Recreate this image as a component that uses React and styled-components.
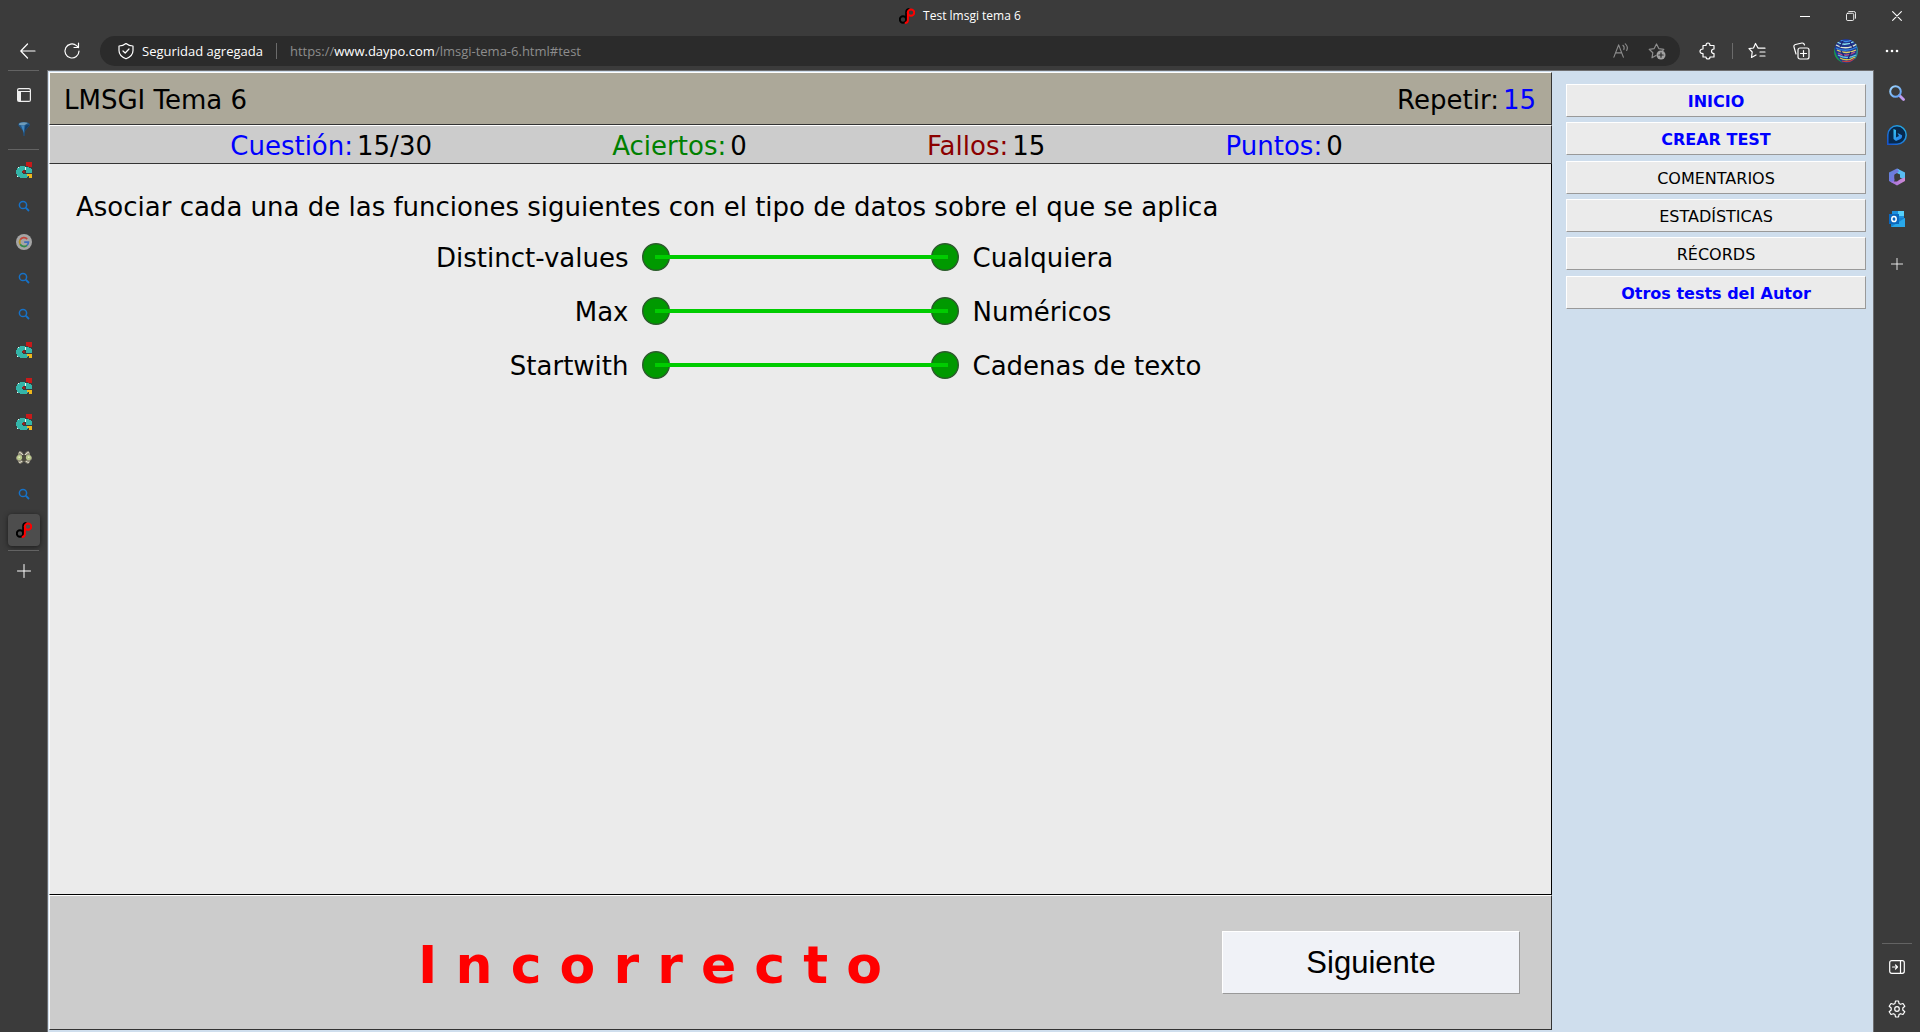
import React from "react";
import styled, { createGlobalStyle } from "styled-components";

const ui = '"Open Sans", "Noto Sans", sans-serif';
const web = '"DejaVu Sans", Verdana, sans-serif';

const GlobalStyle = createGlobalStyle`
  * { box-sizing: border-box; }
  body { margin: 0; background: #3b3b3b; }
  button { font: inherit; color: inherit; border: 0; padding: 0; background: none; cursor: pointer; }
  a { text-decoration: none; color: inherit; }
  h1, p, ul { margin: 0; padding: 0; list-style: none; font-weight: 400; }
  svg { display: block; }
`;

const Window = styled.div`
  min-height: 100vh;
  display: flex;
  flex-direction: column;
  background: #3b3b3b;
  color: #fff;
  font: 12px/16px ${ui};
`;

const TitleBar = styled.header`
  height: 32px;
  display: grid;
  grid-template-columns: 1fr auto 1fr;
  align-items: center;
`;
const WindowTitle = styled.div`
  grid-column: 2;
  display: flex;
  align-items: center;
  gap: 8px;
`;
const WindowControls = styled.div`
  display: flex;
  justify-content: flex-end;
`;
const ControlButton = styled.button`
  width: 46px;
  height: 32px;
  display: grid;
  place-items: center;
`;

const Toolbar = styled.nav`
  height: 38px;
  display: flex;
  align-items: center;
  padding: 0 6px;
`;
const ToolButton = styled.button`
  width: ${(p) => p.$w || 44}px;
  height: 30px;
  display: grid;
  place-items: center;
  flex: none;
`;
const AddressBar = styled.div`
  flex: 1;
  height: 30px;
  margin: 0 6px;
  padding: 0 5px 0 17px;
  border-radius: 15px;
  background: #2b2b2b;
  display: flex;
  align-items: center;
  font-size: 13px;
`;
const Security = styled.button`
  display: flex;
  align-items: center;
  gap: 7px;
`;
const BarDivider = styled.span`
  width: 1px;
  height: 16px;
  margin: 0 ${(p) => p.$gap}px;
  background: #6b6b6b;
  flex: none;
`;
const Url = styled.span`
  flex: 1;
  color: #8d8d8d;
`;
const Host = styled.span`
  color: #fff;
`;

const Body = styled.div`
  flex: 1;
  display: flex;
`;
const Rail = styled.aside`
  width: ${(p) => p.$w}px;
  display: flex;
  flex-direction: column;
  flex: none;
`;
const RailLine = styled.span`
  height: 1px;
  margin: 0 8px;
  background: #636363;
  flex: none;
`;
const RailGroup = styled.div`
  display: flex;
  flex-direction: column;
  align-items: center;
  gap: ${(p) => p.$gap || 0}px;
  padding: ${(p) => p.$pad || 0};
`;
const RailButton = styled.button`
  width: 32px;
  height: 32px;
  border-radius: 4px;
  display: grid;
  place-items: center;
  background: ${(p) => (p.$active ? "#4d4d4d" : "none")};
  box-shadow: ${(p) => (p.$active ? "0 1px 5px #1c1c1c" : "none")};
`;
const Spacer = styled.div`
  flex: 1;
`;

const Page = styled.div`
  flex: 1;
  display: flex;
  border: 1px solid #6e6e70;
  border-bottom: 0;
  background: #cfdeed;
  color: #000;
  font: 26px/32px ${web};
`;
const Quiz = styled.main`
  flex: 1;
  display: flex;
  flex-direction: column;
  margin: 1px 0 2px 1px;
`;
const Band = styled.section`
  border: 1px solid #333;
  border-top-color: #fff;
  border-left-color: #fff;
  display: flex;
  align-items: center;
`;
const TitleBand = styled(Band)`
  height: 53px;
  padding: 2px 15px 0 14px;
  justify-content: space-between;
  background: #aca899;
`;
const StatsBand = styled(Band)`
  height: 39px;
  padding: 2px 28px 0 0;
  justify-content: space-evenly;
  background: #ccc;
`;
const QuestionBand = styled(Band)`
  flex: 1;
  display: block;
  padding: 27px 26px 0;
  background: #ebebeb;
  border-top: 0;
  border-right-color: #000;
  border-bottom-color: #000;
`;
const ResultBand = styled(Band)`
  height: 135px;
  padding: 0 31px 0 28px;
  background: #ccc;
`;
const Heading = styled.h1`
  font-size: 26px;
`;
const Stat = styled.span`
  display: flex;
  gap: 4px;
`;
const Tint = styled.span`
  color: ${(p) => p.$color};
`;

const Pairs = styled.ul`
  padding-top: 7px;
`;
const Pair = styled.li`
  height: 54px;
  display: grid;
  grid-template-columns: 1fr 320px 1fr;
  align-items: center;
  justify-items: center;
  column-gap: 12px;
`;
const Term = styled.span`
  justify-self: ${(p) => p.$side};
  padding-top: 2px;
`;

const Verdict = styled.p`
  flex: 1;
  padding-top: 4px;
  text-align: center;
  font-size: 52px;
  line-height: 64px;
  font-weight: 700;
  color: #f00;
`;
const NextButton = styled.button`
  && {
    width: 298px;
    height: 63px;
    border: 1px solid #fff;
    border-right-color: #999;
    border-bottom-color: #999;
    background: #f0f2f7;
    font: 31px/36px "Liberation Sans", Arial, sans-serif;
  }
`;

const Menu = styled.nav`
  width: 321px;
  padding: 13px 7px 0 14px;
  display: flex;
  flex-direction: column;
  gap: 6px;
`;
const MenuGroup = styled.div`
  display: flex;
  flex-direction: column;
  gap: 5px;
`;
const MenuLink = styled.a`
  height: 33px;
  border: 1px solid #fff;
  border-right-color: #999;
  border-bottom-color: #999;
  background: #ebebeb;
  text-align: center;
  font-size: 16px;
  line-height: 34px;
  font-weight: ${(p) => (p.$strong ? 700 : 400)};
  color: ${(p) => (p.$strong ? "#00f" : "#000")};
`;

const Line = ({ size = 18, box = 20, children, color = "#fff", w = 1.2 }) => (
  <svg width={size} height={size} viewBox={`0 0 ${box} ${box}`} fill="none" stroke={color} strokeWidth={w} strokeLinecap="round" strokeLinejoin="round" aria-hidden="true">
    {children}
  </svg>
);

const Daypo = () => (
  <svg width="16" height="16" viewBox="0 0 16 16" fill="none" strokeWidth="2" aria-hidden="true">
    <circle cx="4" cy="11.5" r="3.2" stroke="#000" />
    <path d="M7.2 12.5V4C7.2 2.2 8.5 1 10.5 1" stroke="#000" />
    <circle cx="12" cy="4.6" r="3.2" stroke="#f00" />
    <path d="M8.9 4V12C8.9 14 8 15 5.8 15" stroke="#f00" />
  </svg>
);
const Campus = () => (
  <svg width="16" height="16" viewBox="0 0 16 16" shapeRendering="crispEdges" aria-hidden="true">
    <path d="M10 0H16V5H12V4H10Z" fill="#c81a1a" />
    <path d="M11 12H16V16H13V14H11Z" fill="#efb71c" />
    <path d="M3 5H4V4H9V8H7V9H6V11H7V12H11V14H12V15H11V16H4V15H2V14H1V12H0V8H1V6H3Z" fill="#34b5a9" />
    <path d="M10 5H13V6H15V7H16V11H10Z" fill="#34b5a9" />
    <path d="M7 8H8V9H9V11H7V10H6V9H7Z" fill="#9a2320" />
    <path d="M9 5H10V8H9ZM2 5H3V6H2ZM1 14H2V15H1Z" fill="#e9f5ef" />
  </svg>
);
const Search = () => (
  <svg width="16" height="16" viewBox="0 0 16 16" fill="none" stroke="#1672c8" strokeWidth="1.5" aria-hidden="true">
    <circle cx="7" cy="7" r="3.6" />
    <path d="M9.7 9.7L13 13" strokeWidth="1.8" />
  </svg>
);
const Google = () => (
  <svg width="16" height="16" viewBox="0 0 16 16" fill="none" strokeWidth="1.8" aria-hidden="true">
    <circle cx="8" cy="8" r="8" fill="#a5a5a5" />
    <path d="M11.2 5A4.5 4.5 0 0 0 4.2 5.7" stroke="#c3453a" />
    <path d="M4.2 5.7A4.5 4.5 0 0 0 4.2 10.3" stroke="#b79220" />
    <path d="M4.2 10.3A4.5 4.5 0 0 0 11 11.4" stroke="#328a4a" />
    <path d="M11 11.4A4.5 4.5 0 0 0 12.4 8.2H8.2" stroke="#3e6fc0" />
  </svg>
);
const Diamond = () => (
  <svg width="16" height="16" viewBox="0 0 16 16" aria-hidden="true">
    <path d="M3 2Q8 0 13 2L14 4L9 10L8.500 15H7.500L7 10L2 4Z" fill="#215585" />
    <path d="M3.500 2Q8 .5 12 2L8 4.500L3 4Z" fill="#6f9cba" />
    <path d="M5 4.500H8.500L8 12Z" fill="#3f86c2" />
    <path d="M9.500 4.500L13.500 4L8.500 10Z" fill="#143e68" />
  </svg>
);
const Butterfly = () => (
  <svg width="16" height="16" viewBox="0 0 16 16" aria-hidden="true">
    <path d="M2 3L4 1L6 2L8 5L10 2L12 1L14 3V5L16 7V9L14 11V12L12 14L10 13L8 11L6 13L4 14L2 12V11L0 9V7L2 5Z" fill="#8f8b78" />
    <path d="M3 2L5 3L7 5M13 2L11 3L9 5M3 12.500L5 12L6 11M13 12.500L11 12L10 11" stroke="#dcd9cb" fill="none" />
    <path d="M6 5H10L11 10L8 11.500L5 10Z" fill="#4c4a3f" />
    <circle cx="3.500" cy="7.500" r="2.600" fill="#b9c98c" />
    <circle cx="12.500" cy="7.500" r="2.600" fill="#b9c98c" />
    <path d="M2.500 6.500H4V8H2.500ZM12 6.500H13.500V8H12Z" fill="#e2eabf" />
  </svg>
);
const Plus = ({ size = 14 }) => (
  <Line size={size} box={14} w={1}><path d="M7 .5V13.500M.5 7H13.500" /></Line>
);
const Avatar = () => (
  <svg width="24" height="24" viewBox="0 0 24 24" fill="none" aria-hidden="true">
    <clipPath id="avatarClip"><circle cx="12" cy="12" r="12" /></clipPath>
    <g clipPath="url(#avatarClip)" strokeWidth="1.300">
      <path d="M0 0H24V24H0Z" fill="#22388f" />
      <path d="M0 7Q1 18 9 24H0Z" fill="#1b9a4a" />
      <path d="M21 4Q25 12 20 20H24V4Z" fill="#2c8f8a" />
      <path d="M3 3Q11 8 21 2" stroke="#8fe4ee" />
      <path d="M5 0Q12 5 19 0" stroke="#3f8ee8" />
      <path d="M2 6Q12 12 23 5" stroke="#dfe8ce" />
      <path d="M2 9Q12 14 23 8" stroke="#2d84df" />
      <path d="M3 11Q12 16 22 11" stroke="#e0cf64" />
      <path d="M4 14Q12 19 21 13" stroke="#c0508c" />
      <path d="M4 16Q13 21 22 16" stroke="#65cbe8" />
      <path d="M6 19Q13 23 21 18" stroke="#d3c84b" />
      <path d="M8 22Q15 24 20 20" stroke="#c6403c" />
      <path d="M9 2L6 8M16 3L19 9M7 12L10 17M17 13L14 20" stroke="#1a2470" />
    </g>
  </svg>
);
const ColorSearch = () => (
  <svg width="16" height="16" viewBox="0 0 16 16" fill="none" aria-hidden="true">
    <defs><linearGradient id="lens" x2="1" y2="1"><stop stopColor="#9fd6ff" /><stop offset="1" stopColor="#5d9bf0" /></linearGradient></defs>
    <path d="M10.500 10.500L14.500 14.500" stroke="#c39bf0" strokeWidth="2.800" strokeLinecap="round" />
    <circle cx="6.500" cy="6.500" r="5.300" stroke="url(#lens)" strokeWidth="2" />
  </svg>
);
const Bing = () => (
  <svg width="20" height="20" viewBox="0 0 20 20" aria-hidden="true">
    <defs>
      <linearGradient id="bingRing" x1="1" x2="0" y2="1"><stop stopColor="#27b6ea" /><stop offset="1" stopColor="#1753d0" /></linearGradient>
      <linearGradient id="bingMark" y2="1"><stop stopColor="#36c5f2" /><stop offset="1" stopColor="#2373e8" /></linearGradient>
    </defs>
    <path d="M.8 19.200V10A9.200 9.200 0 1 1 10 19.200Z" fill="#07294d" stroke="url(#bingRing)" strokeWidth="1.500" />
    <path d="M6.500 4L9 5V12.500L12 11L10.500 8L15 10.200Q15.500 13 13 14.300L9 16L6.500 14Z" fill="url(#bingMark)" />
  </svg>
);
const Office = () => (
  <svg width="18" height="18" viewBox="0 0 18 18" aria-hidden="true">
    <defs>
      <linearGradient id="officeLeft" y2="1"><stop stopColor="#5a86dc" /><stop offset="1" stopColor="#8d6be0" /></linearGradient>
      <linearGradient id="officeBase" x2="1"><stop stopColor="#9c6fe0" /><stop offset="1" stopColor="#d08ad4" /></linearGradient>
    </defs>
    <path d="M9 .5L1 4.500V13L5.500 15.500L6.500 12V6.500L11 4V1.500Z" fill="url(#officeLeft)" />
    <path d="M9 .5L17 4.500V12L12 9.500V6.500L8.500 5L11 3.500Z" fill="#58bdf2" />
    <path d="M17 9.500V13L9 17.500L2 13.500L9 13.500L12.500 11Z" fill="url(#officeBase)" />
    <path d="M6.500 7L9 5.500L12 7V10.500L9 12L6.500 10.500Z" fill="#3b3b3b" />
  </svg>
);
const Outlook = () => (
  <svg width="16" height="16" viewBox="0 0 16 16" aria-hidden="true">
    <path d="M3 0H15V8H3Z" fill="#1c8fdd" />
    <path d="M9 0H15V5H9Z" fill="#55d0fb" />
    <path d="M2 7L16 7V16H2Z" fill="#1482cf" />
    <path d="M16 7L2 16H16Z" fill="#29a8ea" />
    <path d="M0 3H10V13H0Z" fill="#0a67bd" />
    <ellipse cx="5" cy="8" rx="2.200" ry="2.600" fill="none" stroke="#fff" strokeWidth="1.500" />
  </svg>
);

const Connector = () => (
  <svg width="318" height="30" viewBox="0 0 318 30" aria-hidden="true">
    <circle cx="14" cy="15" r="13.300" fill="#090" stroke="#2c5a2c" strokeWidth="1.400" />
    <circle cx="303" cy="15" r="13.300" fill="#090" stroke="#2c5a2c" strokeWidth="1.400" />
    <path d="M13 15H306" stroke="#0c0" strokeWidth="4" />
  </svg>
);

const tabs = [Campus, Search, Google, Search, Search, Campus, Campus, Campus, Butterfly, Search, Daypo];
const stats = [
  ["Cuestión:", "15/30", "#00f"],
  ["Aciertos:", "0", "#008000"],
  ["Fallos:", "15", "#8b0000"],
  ["Puntos:", "0", "#00f"],
];
const pairs = [
  ["Distinct-values", "Cualquiera"],
  ["Max", "Numéricos"],
  ["Startwith", "Cadenas de texto"],
];
const menu = [
  [["INICIO", true], ["CREAR TEST", true]],
  [["COMENTARIOS"], ["ESTADÍSTICAS"], ["RÉCORDS"]],
  [["Otros tests del Autor", true]],
];

export default function App() {
  return (
    <Window>
      <GlobalStyle />
      <TitleBar>
        <WindowTitle><Daypo />Test lmsgi tema 6</WindowTitle>
        <WindowControls>
          <ControlButton aria-label="Minimizar"><Line size={10} box={10} w={1}><path d="M0 5.500H10" /></Line></ControlButton>
          <ControlButton aria-label="Restaurar"><Line size={10} box={11} w={1}><rect x=".5" y="2.500" width="8" height="8" rx="1.500" /><path d="M3 .5H8.500Q10.500 .5 10.500 2.500V8" /></Line></ControlButton>
          <ControlButton aria-label="Cerrar"><Line size={10} box={11}><path d="M.7.7L10.300 10.300M10.300.7L.7 10.300" /></Line></ControlButton>
        </WindowControls>
      </TitleBar>

      <Toolbar aria-label="Navegador">
        <ToolButton aria-label="Atrás"><Line size={16} box={16}><path d="M15 8H1M7.500 1L.8 8L7.500 15" /></Line></ToolButton>
        <ToolButton aria-label="Actualizar"><Line size={18} box={18}><path d="M16 9A7 7 0 1 1 13.500 3.600L15.500 5.500M15.500 1V5.500H11" /></Line></ToolButton>
        <AddressBar>
          <Security>
            <Line size={18} box={18}><path d="M9 1.500Q12 4 16 4V8.500Q16 14 9 16.800Q2 14 2 8.500V4Q6 4 9 1.500ZM6 9L8.200 11L12 7" /></Line>
            Seguridad agregada
          </Security>
          <BarDivider $gap={13} />
          <Url>https://<Host>www.daypo.com</Host>/lmsgi-tema-6.html#test</Url>
          <ToolButton $w={36} aria-label="Leer en voz alta"><Line color="#8d8d8d" size={18} box={19}><path d="M2 16L7 3L12 16M3.800 11.500H10.200M11.500 3.500Q13.500 5 12.500 8M14 2Q17.500 5 15.500 9" /></Line></ToolButton>
          <ToolButton $w={36} aria-label="Agregar a favoritos"><Line color="#8d8d8d" size={18} box={18}><path d="M8 13.500L4 15.800L4.800 10.800L1.200 7.300L6.200 6.600L8.500 2L10.800 6.600L15.800 7.300L14.500 8.800" /><circle cx="13" cy="13" r="4.500" fill="#a0a0a0" stroke="none" /><path d="M13 10.800V15.200M10.800 13H15.200" stroke="#2b2b2b" /></Line></ToolButton>
        </AddressBar>
        <ToolButton aria-label="Extensiones"><Line size={18} box={18}><path d="M4 3.500H7Q7 1 9 1Q11 1 11 3.500H15V7Q12.500 7 12.500 9.300Q12.500 11.500 15 11.500V15H11Q11 17 9 17Q7 17 7 15H4V11.500Q1 11.500 1 9.300Q1 7 4 7Z" /></Line></ToolButton>
        <BarDivider $gap={2} />
        <ToolButton aria-label="Favoritos"><Line size={18} box={18}><path d="M10.500 6.200H17M12 10H17M12 14H17M10 6L7.500 1.500L5.500 6L1 6.700L4.200 10L3.500 15.500L8 13" /></Line></ToolButton>
        <ToolButton aria-label="Colecciones"><Line size={18} box={18}><rect x="6" y="6" width="11" height="11" rx="2" /><path d="M11.500 8.500V14.500M8.500 11.500H14.500M4 12L2 5Q1.500 3 3.500 2.500L10 1Q12 .8 12.500 3" /></Line></ToolButton>
        <ToolButton $w={46} aria-label="Perfil"><Avatar /></ToolButton>
        <ToolButton $w={45} aria-label="Más"><svg width="14" height="4" viewBox="0 0 14 4" fill="#fff"><circle cx="2" cy="2" r="1.300" /><circle cx="7" cy="2" r="1.300" /><circle cx="12" cy="2" r="1.300" /></svg></ToolButton>
      </Toolbar>

      <Body>
        <Rail $w={47}>
          <RailLine />
          <RailGroup $gap={2} $pad="8px 0 4px">
            <RailButton aria-label="Pestañas"><svg width="14" height="14" viewBox="0 0 14 14"><rect x=".6" y=".6" width="12.800" height="12.800" rx="1.500" fill="none" stroke="#eee" strokeWidth="1.200" /><path d="M1 3.500H13" stroke="#eee" /><path d="M1 3.500H4V13H1Z" fill="#eee" /></svg></RailButton>
            <RailButton aria-label="Pestaña anclada"><Diamond /></RailButton>
          </RailGroup>
          <RailLine />
          <RailGroup $gap={4} $pad="4px 0">
            {tabs.map((Icon, i) => (
              <RailButton key={i} $active={i === tabs.length - 1} aria-label={`Pestaña ${i + 1}`}><Icon /></RailButton>
            ))}
          </RailGroup>
          <RailLine />
          <RailGroup $pad="4px 0">
            <RailButton aria-label="Nueva pestaña"><Plus /></RailButton>
          </RailGroup>
        </Rail>

        <Page>
          <Quiz>
            <TitleBand>
              <Heading>LMSGI Tema 6</Heading>
              <Stat>Repetir:<Tint $color="#00f">15</Tint></Stat>
            </TitleBand>
            <StatsBand>
              {stats.map(([label, value, color]) => (
                <Stat key={label}><Tint $color={color}>{label}</Tint>{value}</Stat>
              ))}
            </StatsBand>
            <QuestionBand>
              <p>Asociar cada una de las funciones siguientes con el tipo de datos sobre el que se aplica</p>
              <Pairs>
                {pairs.map(([term, type]) => (
                  <Pair key={term}><Term $side="end">{term}</Term><Connector /><Term $side="start">{type}</Term></Pair>
                ))}
              </Pairs>
            </QuestionBand>
            <ResultBand>
              <Verdict>I n c o r r e c t o</Verdict>
              <NextButton>Siguiente</NextButton>
            </ResultBand>
          </Quiz>
          <Menu aria-label="Menú">
            {menu.map((group, i) => (
              <MenuGroup key={i}>
                {group.map(([label, strong]) => (
                  <MenuLink key={label} href="#" $strong={strong}>{label}</MenuLink>
                ))}
              </MenuGroup>
            ))}
          </Menu>
        </Page>

        <Rail $w={46}>
          <RailGroup $gap={10} $pad="7px 0 13px">
            <RailButton aria-label="Buscar"><ColorSearch /></RailButton>
            <RailButton aria-label="Bing"><Bing /></RailButton>
            <RailButton aria-label="Microsoft 365"><Office /></RailButton>
            <RailButton aria-label="Outlook"><Outlook /></RailButton>
          </RailGroup>
          <RailGroup><RailButton aria-label="Personalizar"><Plus size={12} /></RailButton></RailGroup>
          <Spacer />
          <RailLine />
          <RailGroup $gap={10} $pad="7px 0">
            <RailButton aria-label="Ocultar barra lateral"><Line size={16} box={16}><rect x=".7" y="1.700" width="14.600" height="12.600" rx="2" /><path d="M11.500 2V14M3.500 8H8.500M6.500 6L8.500 8L6.500 10" /></Line></RailButton>
            <RailButton aria-label="Configuración"><Line size={18} box={18}><circle cx="9" cy="9" r="2.300" /><path d="M7.500 1H10.500L11 3.500L12.500 4.300L15 3.500L16.800 6.300L14.800 8V10L16.800 11.700L15 14.500L12.500 13.700L11 14.500L10.500 17H7.500L7 14.500L5.500 13.700L3 14.500L1.200 11.700L3.200 10V8L1.200 6.300L3 3.500L5.500 4.300L7 3.500Z" /></Line></RailButton>
          </RailGroup>
        </Rail>
      </Body>
    </Window>
  );
}
